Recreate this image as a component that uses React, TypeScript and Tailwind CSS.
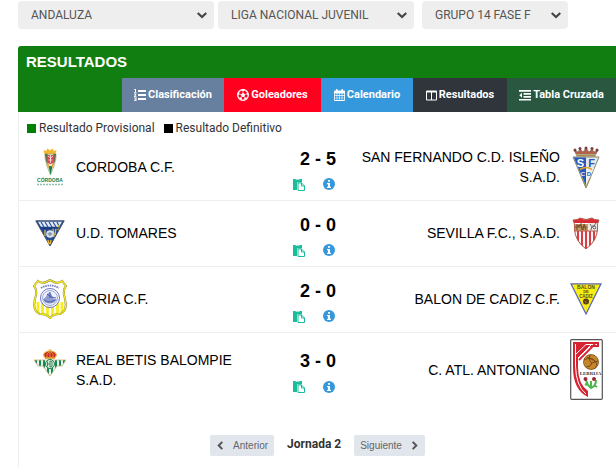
import React from "react";

const options = [
  { label: "Comunidad", value: "ANDALUZA", box: "w-[196px]", gap: "mr-1" },
  { label: "Competición", value: "LIGA NACIONAL JUVENIL", box: "w-[196px]", gap: "mr-2" },
  { label: "Grupo", value: "GRUPO 14 FASE F", box: "w-[146px]", gap: "" },
];

function Chevron({ d, className }: { d: string; className: string }) {
  return (
    <svg viewBox="0 0 10 10" className={className} fill="none" stroke="currentColor" strokeWidth="2.200" aria-hidden="true">
      <path d={d} />
    </svg>
  );
}

function ListIcon() {
  return (
    <svg viewBox="0 0 12 12" className="size-3" fill="currentColor" aria-hidden="true">
      <path d="M1 0h1v3h.5v.8H0V3h1V1H.2V.3zM0 4.500h2.300v1.300L1.200 7.300h1.300v.7H0v-.8l1.300-1.700H0zM0 8.500h2.500V12H0v-.8h1.500v-.6H.5v-.8h1v-.5H0zM4 1h8v2H4zM4 5h8v2H4zM4 9h8v2H4z" />
    </svg>
  );
}

function BallIcon() {
  return (
    <svg viewBox="0 0 12 12" className="size-3" fill="currentColor" aria-hidden="true">
      <circle cx="6" cy="6" r="5.300" fill="none" stroke="currentColor" strokeWidth="1.300" />
      <path d="M6 3.800l2.200 1.600-.8 2.500H4.600l-.8-2.500zM3.800 1L6 2.200 8.200 1 7.500.3h-3zM.6 4.200l.2 2.600 1.600-1.700-.4-2.300zM11.400 4.200l-.2 2.600-1.600-1.700.4-2.300zM2.200 8.300l2.300.3.8 2.200-2-.8zM9.800 8.300l-2.300.3-.8 2.200 2-.8z" />
      <path d="M6 2v2M8 5.500l2-.6M7.300 7.800l1.200 1.500M4.700 7.800L3.500 9.300M4 5.500l-2-.6" stroke="currentColor" strokeWidth=".6" />
    </svg>
  );
}

function CalendarIcon() {
  return (
    <svg viewBox="0 0 11 12" className="h-3 w-[11px]" fill="currentColor" aria-hidden="true">
      <path
        fillRule="evenodd"
        d="M0 2.500Q0 1.500 1 1.500h1V.5Q2 0 2.500 0h.5q.5 0 .5.500v1h4v-1Q7.500 0 8 0h.5Q9 0 9 .5v1h1q1 0 1 1V11q0 1-1 1H1q-1 0-1-1zM.8 4.500v1.800h1.900V4.500zm2.500 0v1.800h1.900V4.500zm2.500 0v1.800h1.900V4.500zm2.500 0v1.800h1.900V4.500zM.8 6.900v1.800h1.900V6.900zm2.500 0v1.800h1.900V6.900zm2.500 0v1.800h1.900V6.900zm2.500 0v1.800h1.900V6.900zM.8 9.300v1.800h1.900V9.300zm2.500 0v1.800h1.900V9.300zm2.500 0v1.800h1.900V9.300zm2.500 0v1.800h1.900V9.300z"
      />
    </svg>
  );
}

function ColumnsIcon() {
  return (
    <svg viewBox="0 0 11 11" className="size-[11px]" fill="currentColor" aria-hidden="true">
      <path fillRule="evenodd" d="M1 .5h9q1 0 1 1v8q0 1-1 1H1q-1 0-1-1v-8q0-1 1-1zM1 2.500v7h4v-7zm5 0v7h4v-7z" />
    </svg>
  );
}

function OutdentIcon() {
  return (
    <svg viewBox="0 0 12 12" className="size-3" fill="currentColor" aria-hidden="true">
      <path d="M0 1h12v1.700H0zM4.500 4H12v1.700H4.500zM4.500 7H12v1.700H4.500zM0 10h12v1.500H0zM3 3.800v4.900L.3 6.200z" />
    </svg>
  );
}

function PasteIcon() {
  return (
    <svg viewBox="0 0 12 13" className="h-[13px] w-3 text-[#1abc9c]" aria-hidden="true">
      <path d="M0 1h9v3.500H4V12H0z" fill="currentColor" />
      <path d="M2.500 1.500h4" stroke="#fff" strokeWidth=".6" />
      <path d="M5 5h3.500l3 3v4.500H5zM8.500 5v3h3" fill="#fff" stroke="currentColor" />
    </svg>
  );
}

function InfoIcon() {
  return (
    <svg viewBox="0 0 12 12" className="size-3" aria-hidden="true">
      <circle cx="6" cy="6" r="6" fill="#3598dc" />
      <path d="M5 2h2v1.800H5zM4 5h3v3.800h1V10H4V8.800h1V6.200H4z" fill="#fff" />
    </svg>
  );
}

const tabs = [
  { name: "Clasificación", bg: "bg-[#67809f]", width: "w-[102px]", icon: <ListIcon /> },
  { name: "Goleadores", bg: "bg-[#ff001f]", width: "w-[97px]", icon: <BallIcon /> },
  { name: "Calendario", bg: "bg-[#3598dc]", width: "w-[92px]", icon: <CalendarIcon /> },
  { name: "Resultados", bg: "bg-[#2f353b]", width: "w-[94px]", icon: <ColumnsIcon /> },
  { name: "Tabla Cruzada", bg: "bg-[#29573f]", width: "w-[109px]", icon: <OutdentIcon /> },
];

function CordobaCrest() {
  return (
    <svg viewBox="0 0 28 38" className="mx-auto h-[38px] w-7" role="img" aria-label="Córdoba">
      <path d="M7.500 2l2.500 1 1.500-2.500L14 2.500l2.500-2L18 3l2.500-1-1 4.500h-11z" fill="#f2b62f" />
      <path d="M9 6h11v4q-1 7-5.500 17Q10 17 9 10z" fill="#e4ece0" stroke="#8c9a5c" strokeWidth=".6" />
      <path d="M9 6h2.500v11Q9.300 12 9 6zM17.500 6H20q-.3 6-2.500 11zM12.500 18h4l-2 9z" fill="#15834c" />
      <path d="M10.500 7h8v7q-4 4-8 0z" fill="#d84a4f" />
      <path d="M12 8l2.500 2L17 8M12.500 12h4M14.500 7v8" stroke="#fff" strokeWidth=".7" fill="none" />
      <path d="M10.500 16l1.500-1 1.500 3-1 2zM18.500 16l-1.500-1-1.500 3 1 2z" fill="#eea13a" />
      <text x="14" y="33.500" textAnchor="middle" fontSize="5" fontWeight="700" fontFamily="Liberation Sans, sans-serif" fill="#16804d">CÓRDOBA</text>
      <path d="M1 36.500h26" stroke="#91bfa8" strokeWidth="1.500" strokeDasharray="2 1" />
    </svg>
  );
}

function TomaresCrest() {
  return (
    <svg viewBox="0 0 30 27" className="mx-auto h-[27px] w-[30px]" role="img" aria-label="Tomares">
      <path d="M.8.800h28.400L15 26z" fill="#244a91" stroke="#44536c" />
      <path d="M3 1.800h24l-3 5H6z" fill="#e8edf4" />
      <path d="M6 2l3 5M10 2l3 5M14 2l3 5M18 2l3 5M22 2l2 4" stroke="#2f559b" strokeWidth="1.300" />
      <path d="M18 8l1 9M21 8l-1 7M10 10v6M24 5l-1 5M13 20l1 4M16 20l-1 4" stroke="#e6b83c" strokeWidth="1.300" />
      <path d="M5 8h19" stroke="#173b82" strokeWidth="1.400" />
      <circle cx="15" cy="14" r="3.800" fill="#dce3e9" />
      <path d="M15 12l2 1.500-1 2h-2l-1-2zM12 14h6" fill="#738aab" stroke="#9bacbf" strokeWidth=".6" />
    </svg>
  );
}

function CoriaCrest() {
  return (
    <svg viewBox="0 0 34 40" className="mx-auto h-10 w-[34px]" role="img" aria-label="Coria">
      <defs>
        <clipPath id="coria-shield">
          <path d="M5 2q4 3 8 1l4-2 4 2q4 2 8-1l4 5q-3 3-2 9 5 16-4 19-7 0-10 4-3-4-10-4-9-3-4-19 1-6-2-9z" />
        </clipPath>
      </defs>
      <path d="M5 2q4 3 8 1l4-2 4 2q4 2 8-1l4 5q-3 3-2 9 5 16-4 19-7 0-10 4-3-4-10-4-9-3-4-19 1-6-2-9z" fill="#fff" />
      <path d="M5 23v16M9.500 23v16M14.500 23v16M19.500 23v16M24.500 23v16M29 23v16" stroke="#f8ed18" strokeWidth="2.800" clipPath="url(#coria-shield)" />
      <path d="M5 2q4 3 8 1l4-2 4 2q4 2 8-1l4 5q-3 3-2 9 5 16-4 19-7 0-10 4-3-4-10-4-9-3-4-19 1-6-2-9z" fill="none" stroke="#878143" strokeWidth="2" />
      <path d="M5 2q4 3 8 1l4-2 4 2q4 2 8-1l4 5q-3 3-2 9 5 16-4 19-7 0-10 4-3-4-10-4-9-3-4-19 1-6-2-9z" fill="none" stroke="#f1e51c" strokeWidth="1.300" />
      <path d="M8 9q9-5 18 0" fill="none" stroke="#737ac1" strokeWidth="1.800" strokeDasharray="1.500 .8" />
      <circle cx="17" cy="19" r="9.500" fill="#fff" stroke="#6874bd" />
      <circle cx="17" cy="19" r="7.500" fill="#eef2fb" stroke="#7986c5" strokeWidth=".7" />
      <path d="M10 20q3-1 4-5l3-2 4 7h3l-2 3q-6 3-10 0z" fill="#8c9bd0" />
      <path d="M14 15l4 3 5 1M11 21q5 4 11 0M17 13v6" fill="none" stroke="#4656a8" strokeWidth=".9" />
    </svg>
  );
}

function BetisCrest() {
  return (
    <svg viewBox="0 0 34 28" className="mx-auto mb-[14px] h-7 w-[34px]" role="img" aria-label="Real Betis">
      <defs>
        <clipPath id="betis-shield"><path d="M1 11h32l-4 6h-5l-7 10-7-10H5z" /></clipPath>
      </defs>
      <g clipPath="url(#betis-shield)">
        <path fill="#fff" d="M0 10h34v18H0z" />
        <path d="M3 10v18M7 10v18M11 10v18M15 10v18M19 10v18M23 10v18M27 10v18M31 10v18" stroke="#168957" strokeWidth="2.200" />
      </g>
      <path d="M1 11h32l-4 6h-5l-7 10-7-10H5z" fill="none" stroke="#cbb277" strokeWidth=".8" />
      <circle cx="17" cy="15" r="4.500" fill="#dcebd7" stroke="#16864f" />
      <path d="M14.500 12.500v5M17 12v6M14.500 15H17M17 12q3 0 2 3 1 3-2 3" fill="none" stroke="#268458" strokeWidth=".9" />
      <path d="M12 8.500Q9 5 13 3l3-1h2l3 1q4 2 1 5.500z" fill="#c62332" stroke="#e8a731" strokeWidth="1.100" />
      <path d="M14 8q-1-3 2-5M20 8q1-3-2-5M17 0v8M15.500 1h3" stroke="#efb52e" strokeWidth=".8" fill="none" />
      <path d="M12 9h10" stroke="#dc9128" strokeWidth="1.600" />
    </svg>
  );
}

function SanFernandoCrest() {
  return (
    <svg viewBox="0 0 28 43" className="mx-auto h-[43px] w-7" role="img" aria-label="San Fernando">
      <path d="M5 10L2 4l4 2 2-3 3 3 3-4 3 4 3-3 2 3 4-2-3 6z" fill="#b3614e" stroke="#77715b" strokeWidth=".7" />
      <path d="M4 8.500h20M4 10h20" stroke="#b7ac70" strokeWidth="1" />
      <g fill="#7b3d3c">
        <circle cx="3" cy="4" r="1.500" /><circle cx="8" cy="2.500" r="1.500" /><circle cx="14" cy="2" r="1.500" /><circle cx="20" cy="2.500" r="1.500" /><circle cx="25" cy="4" r="1.500" />
      </g>
      <path d="M1 11h26L14 42z" fill="#e5e9ef" stroke="#8a8569" />
      <path d="M1.800 11.500H14V40L5 19z" fill="#2458bb" />
      <path d="M14 22h8L14 40z" fill="#eef0f3" />
      <path d="M8 23.500q6-4 12 0" stroke="#e5a333" strokeWidth="1.600" fill="none" />
      <g fontFamily="Liberation Sans, sans-serif" fontWeight="700" textAnchor="middle">
        <text x="8.500" y="20.500" fontSize="11" fill="#fff">S</text>
        <text x="19.500" y="20.500" fontSize="11" fill="#2458bb">F</text>
        <text x="11" y="30" fontSize="6" fill="#e9edf2">C</text>
        <text x="17" y="30" fontSize="6" fill="#3463b5">D</text>
      </g>
      <path d="M10 32l4 9 4-9" stroke="#a49350" fill="none" />
    </svg>
  );
}

function SevillaCrest() {
  return (
    <svg viewBox="0 0 28 33" className="mx-auto h-[33px] w-7" role="img" aria-label="Sevilla">
      <defs>
        <clipPath id="sevilla-shield"><path d="M1 3q5 0 7-2 6 3 12 0 2 2 7 2-2 3-1.500 9Q25 24 14 32 3 24 2.500 12 3 6 1 3z" /></clipPath>
      </defs>
      <g clipPath="url(#sevilla-shield)">
        <path d="M0 0h28v33H0z" fill="#fff" />
        <path d="M0 0h28v6H0z" fill="#d72b35" />
        <path d="M2 14v19M6 14v19M10 14v19M14 14v19M18 14v19M22 14v19M26 14v19" stroke="#d83d47" strokeWidth="2.100" />
        <path d="M2 7h14v7H2z" fill="#c99b65" />
        <path d="M16 6h12v8H16z" fill="#eee9e3" />
      </g>
      <path d="M5 13V8l2 1 2-2 1 6M11 13l1-6 2 6M3 10h12" stroke="#765131" strokeWidth="1.200" fill="none" />
      <path d="M18 7q3 2 1 6M20 9h3q2 3-1 3-3-2 0-3l2-3" stroke="#545557" strokeWidth=".9" fill="none" />
      <path d="M1 3q5 0 7-2 6 3 12 0 2 2 7 2-2 3-1.500 9Q25 24 14 32 3 24 2.500 12 3 6 1 3zM2.500 14h23" fill="none" stroke="#b15848" />
    </svg>
  );
}

function BalonCrest() {
  return (
    <svg viewBox="0 0 32 32" className="mx-auto size-8" role="img" aria-label="Balón de Cádiz">
      <path d="M1 .8h30L16 31z" fill="#f8ed12" stroke="#5965bb" strokeWidth="1.200" />
      <g fontFamily="Liberation Sans, sans-serif" fontWeight="700" textAnchor="middle" fill="#534c22">
        <text x="16" y="6" fontSize="5">BALON</text>
        <text x="16" y="10" fontSize="4">DE</text>
        <text x="16" y="14.500" fontSize="4.500">CADIZ</text>
      </g>
      <circle cx="16" cy="18.500" r="3" fill="#55371a" />
      <path d="M14 18l4 2M17 17l-2 4" stroke="#9b752c" strokeWidth=".6" />
    </svg>
  );
}

function AntonianoCrest() {
  return (
    <svg viewBox="0 0 33 61" className="mx-auto h-[61px] w-[33px]" role="img" aria-label="Atlético Antoniano">
      <rect x=".7" y=".7" width="31.600" height="59.600" rx="1" fill="#fff" stroke="#555" strokeWidth="1.200" />
      <path d="M3 3h26v5H19L8 19v9q0 17 10 24v6Q3 51 3 28z" fill="#d62332" />
      <path d="M5.500 5v22Q6 47 16 55M6 15L16 5.500h11M8 19l13-13" stroke="#fff" strokeWidth="1" fill="none" />
      <path d="M9 21L25 5" stroke="#d62332" strokeWidth="1.800" />
      <circle cx="21" cy="23" r="7.500" fill="#c78527" stroke="#765122" strokeWidth=".8" />
      <path d="M14 21q7-4 11 1t-1 8M20 16q-2 6 2 8l6-2M16 28q5 0 6-4M17 18l8 4" stroke="#754b1d" fill="none" />
      <text x="20.500" y="36" textAnchor="middle" fontSize="5" fontWeight="700" fontFamily="Liberation Serif, serif" fill="#3a3937">LEBRIJA</text>
      <path d="M16 41q1 5 5 8 5-2 5-8M21 42v7M17 46l-2-1M24 46l3 2" stroke="#4eb84f" strokeWidth="2" fill="none" />
      <circle cx="15.500" cy="40" r="2" fill="#a92a36" /><circle cx="24" cy="40" r="2" fill="#a92a36" />
      <path d="M14 39l2 2M25 39l-2 2" stroke="#632632" />
    </svg>
  );
}

const matches = [
  { home: "CORDOBA C.F.", homeCrest: <CordobaCrest />, score: "2 - 5", away: "SAN FERNANDO C.D. ISLEÑO S.A.D.", awayCrest: <SanFernandoCrest />, row: "h-[65px] border-b" },
  { home: "U.D. TOMARES", homeCrest: <TomaresCrest />, score: "0 - 0", away: "SEVILLA F.C., S.A.D.", awayCrest: <SevillaCrest />, row: "h-[66px] border-b" },
  { home: "CORIA C.F.", homeCrest: <CoriaCrest />, score: "2 - 0", away: "BALON DE CADIZ C.F.", awayCrest: <BalonCrest />, row: "h-[66px] border-b" },
  { home: "REAL BETIS BALOMPIE S.A.D.", homeCrest: <BetisCrest />, score: "3 - 0", away: "C. ATL. ANTONIANO", awayCrest: <AntonianoCrest />, row: "h-[75px]" },
];

export default function App() {
  return (
    <main className="min-h-screen bg-white pt-px pl-[18px] font-[Roboto,sans-serif] text-xs text-[#333]">
      <form className="flex">
        {options.map((o) => (
          <label key={o.label} className={`relative ${o.box} ${o.gap}`}>
            <select aria-label={o.label} className="h-7 w-full appearance-none rounded-[4px] bg-[#eee] pr-7 pl-[13px] text-xs text-[#555]">
              <option>{o.value}</option>
            </select>
            <Chevron d="M.7 3l4.300 4 4.300-4" className="pointer-events-none absolute top-[9px] right-[7px] size-[10px] text-[#444]" />
          </label>
        ))}
      </form>

      <section className="mt-[17px] flex min-h-[421px] flex-col">
        <header className="rounded-tl-[3px] bg-[#117e11]">
          <h1 className="h-8 pl-2 font-['Liberation_Sans',sans-serif] text-[15px] leading-8 font-bold text-white">RESULTADOS</h1>
          <nav className="flex justify-end">
            {tabs.map((t) => (
              <a key={t.name} href="#" className={`flex h-[34px] shrink-0 items-center justify-center gap-0.5 text-[11px] font-bold whitespace-nowrap text-white ${t.width} ${t.bg}`}>
                {t.icon}
                {t.name}
              </a>
            ))}
          </nav>
        </header>

        <div className="grow border-l border-[#eee]">
          <div className="flex gap-[9px] pt-[9px] pl-2 leading-[14px]">
            <span className="flex items-center gap-[3px]"><i className="size-[9px] bg-[#008000]" />Resultado Provisional</span>
            <span className="flex items-center gap-[3px]"><i className="size-[9px] bg-black" />Resultado Definitivo</span>
          </div>

          <table className="w-full table-fixed border-collapse font-['Liberation_Sans',sans-serif] text-sm leading-5 text-black">
            <colgroup>
              <col className="w-[57px]" />
              <col />
              <col className="w-[78px]" />
              <col />
              <col className="w-14" />
            </colgroup>
            <tbody>
              {matches.map((m) => (
                <tr key={m.home} className={`border-[#eee] ${m.row}`}>
                  <td className="pl-1">{m.homeCrest}</td>
                  <td className="pr-4">{m.home}</td>
                  <td>
                    <div className="text-center text-lg leading-[30px] font-bold">{m.score}</div>
                    <div className="mt-1 flex items-center justify-center gap-[18px] pr-2">
                      <a href="#" aria-label="Acta"><PasteIcon /></a>
                      <a href="#" aria-label="Información"><InfoIcon /></a>
                    </div>
                  </td>
                  <td className="text-right">{m.away}</td>
                  <td className="pr-1">{m.awayCrest}</td>
                </tr>
              ))}
            </tbody>
          </table>

          <div className="mt-7 flex items-center justify-center gap-[13px] font-['Liberation_Sans',sans-serif] text-[10px] text-[#666]">
            <button className="flex h-[21px] items-center gap-2 rounded-[2px] bg-[#e1e5ec] px-1.5">
              <Chevron d="M7 1L3 5l4 4" className="size-[9px] text-[#555]" />
              Anterior
            </button>
            <strong className="pb-1 font-[Roboto,sans-serif] text-xs leading-4 text-[#333]">Jornada 2</strong>
            <button className="flex h-[21px] items-center gap-2 rounded-[2px] bg-[#e1e5ec] px-1.5">
              Siguiente
              <Chevron d="M3 1l4 4-4 4" className="size-[9px] text-[#555]" />
            </button>
          </div>
        </div>
      </section>
    </main>
  );
}
